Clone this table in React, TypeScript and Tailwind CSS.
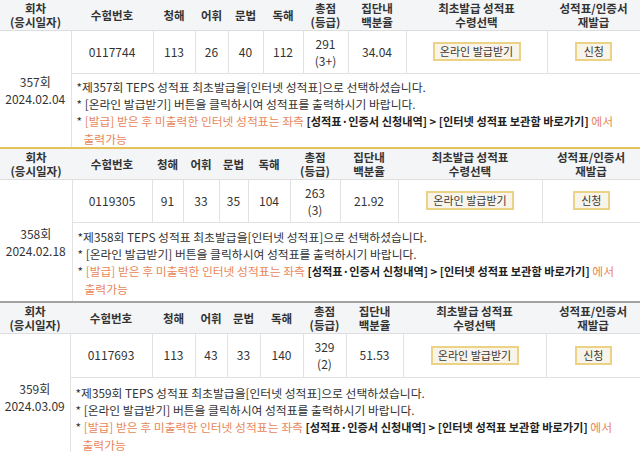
const font = "font-['Noto_Sans_CJK_KR','Noto_Sans',sans-serif]";

type Block = {
  round: string;
  date: string;
  no: string;
  scores: string[];
  total: string;
  grade: string;
  pct: string;
  cols: string[];
  wrap: string;
  dataH: string;
  notesCls: string;
};

const blocks: Block[] = [
  {
    round: "357",
    date: "2024.02.04",
    no: "0117744",
    scores: ["113", "26", "40", "112"],
    total: "291",
    grade: "3+",
    pct: "34.04",
    cols: ["w-[71px]", "w-[82px]", "w-[42px]", "w-[33px]", "w-[35px]", "w-[40px]", "w-[45px]", "w-[58px]", "w-[141px]", "w-[93px]"],
    wrap: "border-b-2 border-[#e6c25a]",
    dataH: "h-[43px]",
    notesCls: "h-[74px] pt-[4px]",
  },
  {
    round: "358",
    date: "2024.02.18",
    no: "0119305",
    scores: ["91", "33", "35", "104"],
    total: "263",
    grade: "3",
    pct: "21.92",
    cols: ["w-[72px]", "w-[80px]", "w-[31px]", "w-[36px]", "w-[29px]", "w-[42px]", "w-[50px]", "w-[58px]", "w-[144px]", "w-[98px]"],
    wrap: "border-b-2 border-[#a3a3a3]",
    dataH: "h-[43px]",
    notesCls: "h-[79px] pt-[2px]",
  },
  {
    round: "359",
    date: "2024.03.09",
    no: "0117693",
    scores: ["113", "43", "33", "140"],
    total: "329",
    grade: "2",
    pct: "51.53",
    cols: ["w-[70px]", "w-[82px]", "w-[43px]", "w-[32px]", "w-[33px]", "w-[43px]", "w-[43px]", "w-[57px]", "w-[143px]", "w-[94px]"],
    wrap: "",
    dataH: "h-[44px]",
    notesCls: "h-[80px] pt-[6px] align-top",
  },
];

const headers: string[][] = [
  ["회차", "(응시일자)"],
  ["수험번호"],
  ["청해"],
  ["어휘"],
  ["문법"],
  ["독해"],
  ["총점", "(등급)"],
  ["집단내", "백분율"],
  ["최초발급 성적표", "수령선택"],
  ["성적표/인증서", "재발급"],
];

function ScoreBlock({ b }: { b: Block }) {
  const td = `border-l border-b border-[#e2e2e2] text-center text-[12px] text-[#333] ${b.dataH}`;
  return (
    <div className={b.wrap}>
      <table className="w-full table-fixed border-collapse">
        <colgroup>
          {b.cols.map((c, i) => (
            <col key={i} className={c} />
          ))}
        </colgroup>
        <thead>
          <tr className="bg-[#f4f5f7]">
            {headers.map((h, i) => (
              <th
                key={i}
                className="h-[30px] border-b border-[#dedede] p-0 text-center text-[11.5px] font-bold leading-[14px] text-[#333]"
              >
                {h.map((l, j) => (
                  <div key={j}>{l}</div>
                ))}
              </th>
            ))}
          </tr>
        </thead>
        <tbody>
          <tr>
            <td rowSpan={2} className="p-0 pt-[3px] text-center align-middle text-[12px] leading-[17px] text-[#333]">
              <div>{b.round}회</div>
              <div>{b.date}</div>
            </td>
            <td className={td}>{b.no}</td>
            {b.scores.map((s, i) => (
              <td key={i} className={td}>
                {s}
              </td>
            ))}
            <td className={`${td} leading-[17px]`}>
              <div>{b.total}</div>
              <div>({b.grade})</div>
            </td>
            <td className={td}>{b.pct}</td>
            <td className={td}>
              <button className="h-[19px] w-[88px] border-2 border-[#ecd285] bg-[#f8f4e9] text-[11px] leading-[15px] text-[#3a3a3a]">
                온라인 발급받기
              </button>
            </td>
            <td className={td}>
              <button className="h-[19px] w-[37px] border-2 border-[#ecd285] bg-[#f8f4e9] text-[11px] leading-[15px] text-[#3a3a3a]">
                신청
              </button>
            </td>
          </tr>
          <tr>
            <td colSpan={9} className={`border-l border-[#e2e2e2] pl-[5px] pr-1 text-[11.8px] leading-[17px] text-[#333] ${b.notesCls}`}>
              <div>*제{b.round}회 TEPS 성적표 최초발급을[인터넷 성적표]으로 선택하셨습니다.</div>
              <div>* [온라인 발급받기] 버튼을 클릭하시여 성적표를 출력하시기 바랍니다.</div>
              <div className="break-keep pl-[7px] -indent-[7px]">
                *{" "}
                <span className="text-[#e8875a]">[발급] 받은 후 미출력한 인터넷 성적표는 좌측 </span>
                <span className="text-[11.2px] leading-[17px] font-bold text-[#222]">[성적표·인증서 신청내역] &gt; [인터넷 성적표 보관함 바로가기]</span>{" "}
                <span className="text-[#e8875a]">에서</span>{" "}
                <span className="text-[#e8875a]">출력가능</span>
              </div>
            </td>
          </tr>
        </tbody>
      </table>
    </div>
  );
}

export default function App() {
  return (
    <div className={`h-[452px] w-[640px] overflow-hidden bg-white ${font}`}>
      {blocks.map((b) => (
        <ScoreBlock key={b.round} b={b} />
      ))}
    </div>
  );
}
